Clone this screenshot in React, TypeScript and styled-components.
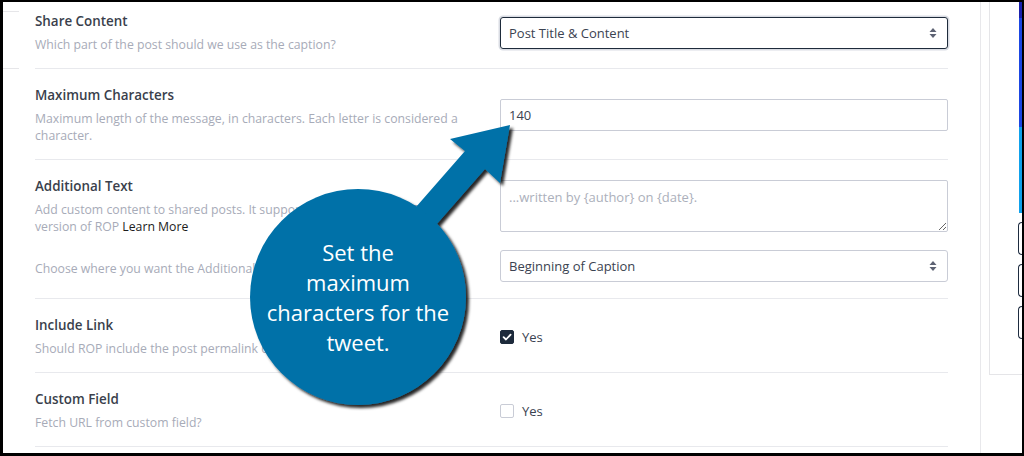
import React from 'react'
import styled, { createGlobalStyle } from 'styled-components'

type FieldProps = {
    title: string
    children: React.ReactNode
    control: React.ReactNode
}

const Field = ({ title, children, control }: FieldProps) => {
  return (
    <Row>
        <Label>
            <Title>{title}</Title>
            <Desc>{children}</Desc>
        </Label>
        <Control>{control}</Control>
    </Row>
  )
}

const SelectArrows = () => (
    <svg width="8" height="12" viewBox="0 0 8 12">
        <path d="M4 1 L7.5 5 H0.5 Z" fill="#5d6273" />
        <path d="M4 11 L7.5 7 H0.5 Z" fill="#5d6273" />
    </svg>
)

const Check = ({ checked }: { checked?: boolean }) => (
    <CheckRow>
        <CheckBox $checked={checked}>
            {checked && (
                <svg width="10" height="10" viewBox="0 0 10 10">
                    <path d="M1.6 5.2 L4 7.5 L8.6 2.6" stroke="#fff" strokeWidth="1.8" fill="none" strokeLinecap="round" strokeLinejoin="round" />
                </svg>
            )}
        </CheckBox>
        Yes
    </CheckRow>
)

const App = () => {
  return (
    <Frame>
        <GlobalStyle />
        <Screen>
            <LeftStub>
                <div className="stub-line" />
                <div className="stub-line" />
            </LeftStub>

            <Settings>
                <Field
                   title='Share Content'
                   control={<SelectBox $focused>Post Title &amp; Content<SelectArrows /></SelectBox>}
                   >
                    Which part of the post should we use as the caption?
                </Field>
                <Field
                   title='Maximum Characters'
                   control={<TextInput defaultValue="140" />}
                   >
                    Maximum length of the message, in characters. Each letter is considered a character.
                </Field>

                <Row $padBottom={16}>
                    <Label>
                        <Title>Additional Text</Title>
                        <Desc>
                            Add custom content to shared posts. It supports magic tags in the Pro<br />
                            version of ROP <LearnMore>Learn More</LearnMore>
                        </Desc>
                    </Label>
                    <Control>
                        <TextArea placeholder="...written by {author} on {date}." />
                    </Control>
                    <Desc>Choose where you want the Additional Text to appear.</Desc>
                    <Control>
                        <SelectBox>Beginning of Caption<SelectArrows /></SelectBox>
                    </Control>
                </Row>

                <Field title='Include Link' control={<Check checked />}>
                    Should ROP include the post permalink or not?
                </Field>
                <Field title='Custom Field' control={<Check />}>
                    Fetch URL from custom field?
                </Field>
            </Settings>

            <Divider />

            <SideCard>
                <BlueBar />
                <SideButton />
                <SideButton />
                <SideButton />
            </SideCard>
        </Screen>

        <Callout>
            <svg width="300" height="310" viewBox="230 110 300 310">
                <defs>
                    <filter id="callout-shadow" x="-20%" y="-20%" width="140%" height="140%">
                        <feDropShadow dx="3" dy="3" stdDeviation="1.6" floodColor="#000" floodOpacity="0.85" />
                    </filter>
                </defs>
                <g filter="url(#callout-shadow)" fill="#0271a8">
                    <path d="M360 271 L465 151 L450 139 L510 125 L500 183 L485 169 L380 289 Z" />
                    <circle cx="358" cy="297" r="108" />
                </g>
            </svg>
            <CalloutText>
                Set the<br />
                maximum<br />
                characters for the<br />
                tweet.
            </CalloutText>
        </Callout>
    </Frame>
  )
}

export default App


const GlobalStyle = createGlobalStyle`
    html, body {
        margin: 0;
        padding: 0;
        background: #000;
    }
    body {
        font-family: "Open Sans", "Noto Sans", sans-serif;
    }
`

const Frame = styled.div`
    position: relative;
    width: 1024px;
    height: 456px;
    box-sizing: border-box;
    padding: 2px 2px 3px 3px;
    background: #000;
    overflow: hidden;
`

const Screen = styled.div`
    display: flex;
    height: 100%;
    background: #fff;
    overflow: hidden;
`

const LeftStub = styled.div`
    width: 16px;
    flex-shrink: 0;
    padding-top: 9px;
    .stub-line{
        height: 1px;
        background: #e6e6e9;
        margin-bottom: 56px;
    }
`

const Settings = styled.div`
    width: 913px;
    flex-shrink: 0;
    margin: -7px 0 0 16px;
`

const Row = styled.div<{ $padBottom?: number }>`
    display: grid;
    grid-template-columns: 465px 448px;
    align-items: center;
    row-gap: 15px;
    padding: 17px 0 ${p => p.$padBottom ?? 15}px;
    border-bottom: 1px solid #e8e9ed;
`

const Label = styled.div`
    padding-right: 14px;
`

const Title = styled.div`
    font-size: 13.4px;
    font-weight: 600;
    line-height: 19px;
    color: #3a3f4c;
`

const Desc = styled.div`
    margin-top: 5px;
    font-size: 12.25px;
    line-height: 17px;
    color: #a7abb8;
`

const LearnMore = styled.span`
    color: #1c1c1c;
`

const Control = styled.div`
    display: flex;
    flex-direction: column;
`

const SelectBox = styled.div<{ $focused?: boolean }>`
    display: flex;
    align-items: center;
    justify-content: space-between;
    box-sizing: border-box;
    height: 32px;
    padding: 0 10px 0 8px;
    border: 1px solid ${p => p.$focused ? '#1e2b3b' : '#c9ccd6'};
    border-radius: 3px;
    box-shadow: ${p => p.$focused ? '0 0 0 1.5px #d9dce3' : 'none'};
    font-size: 13px;
    color: #3b4351;
`

const TextInput = styled.input`
    box-sizing: border-box;
    height: 32px;
    padding: 0 8px;
    border: 1px solid #c9ccd6;
    border-radius: 2px;
    font-family: inherit;
    font-size: 13px;
    color: #3b4351;
    outline: none;
`

const TextArea = styled.textarea`
    box-sizing: border-box;
    height: 52px;
    padding: 7px 8px;
    border: 1px solid #c9ccd6;
    border-radius: 2px;
    font-family: inherit;
    font-size: 13px;
    color: #3b4351;
    outline: none;
    &::placeholder{
        color: #acb0bb;
    }
`

const CheckRow = styled.div`
    display: flex;
    align-items: center;
    gap: 8px;
    font-size: 13px;
    color: #3b4351;
`

const CheckBox = styled.span<{ $checked?: boolean }>`
    display: flex;
    align-items: center;
    justify-content: center;
    box-sizing: border-box;
    width: 14px;
    height: 14px;
    border-radius: 2px;
    border: 1px solid ${p => p.$checked ? '#1d2a3b' : '#c9ccd6'};
    background: ${p => p.$checked ? '#1d2a3b' : '#fff'};
`

const Divider = styled.div`
    width: 1px;
    flex-shrink: 0;
    margin-left: 32px;
    background: #e8e8eb;
`

const SideCard = styled.div`
    flex: 1;
    align-self: flex-start;
    height: 373px;
    box-sizing: border-box;
    margin-left: 8px;
    padding-left: 28px;
    border-left: 1px solid #e5e5e8;
    border-bottom: 1px solid #e5e5e8;
`

const BlueBar = styled.div`
    height: 211px;
    margin-left: 1px;
    background: linear-gradient(to bottom, #1b21ad 0 16px, #1b46e2 16px 125px, #0fa1ec 125px);
`

const SideButton = styled.div`
    height: 33px;
    margin-top: 9px;
    box-sizing: border-box;
    border: 1.5px solid #1e2c40;
    border-right: none;
    border-radius: 4px 0 0 4px;
    &:first-of-type{
        margin-top: 20px;
    }
`

const Callout = styled.div`
    position: absolute;
    left: 230px;
    top: 110px;
    width: 300px;
    height: 310px;
    pointer-events: none;
`

const CalloutText = styled.div`
    position: absolute;
    left: 18px;
    top: 127px;
    width: 220px;
    font-size: 22px;
    line-height: 30px;
    text-align: center;
    color: #fff;
`
